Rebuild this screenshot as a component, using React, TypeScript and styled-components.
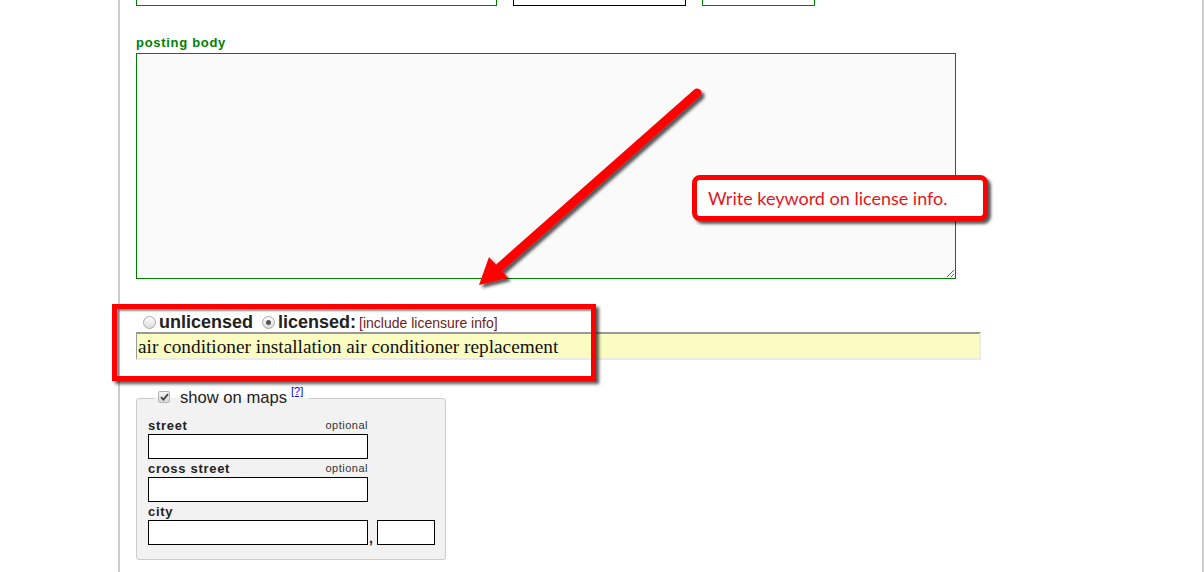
import React from 'react';
import styled, { createGlobalStyle } from 'styled-components';

const GlobalStyle = createGlobalStyle`
  html, body {
    margin: 0;
    padding: 0;
    background: #fff;
    font-family: "Liberation Sans", Arial, sans-serif;
    color: #222;
  }
`;

const Root = styled.div`
  position: relative;
  width: 1204px;
  height: 572px;
  overflow: hidden;
`;

const Page = styled.div`
  box-sizing: border-box;
  margin-left: 118px;
  width: 1086px;
  min-height: 572px;
  border-left: 2px solid #ccc;
  border-right: 2px solid #ccc;
  padding-left: 16px;
  overflow: hidden;
`;

const TopRow = styled.div`
  display: flex;
  gap: 16px;
  margin-top: -20px;
`;

const TopBox = styled.div<{ $width: number; $color: string }>`
  box-sizing: border-box;
  width: ${p => p.$width}px;
  height: 26px;
  border: 1px solid ${p => p.$color};
  background: #fff;
`;

const GreenLabel = styled.label`
  display: block;
  margin: 29px 0 2px;
  font-size: 13px;
  line-height: 16px;
  font-weight: bold;
  letter-spacing: 0.7px;
  color: #008000;
`;

const BodyArea = styled.textarea`
  display: block;
  box-sizing: border-box;
  width: 820px;
  height: 226px;
  margin: 0;
  border: 1px solid #008000;
  background: #fafafa;
  outline: none;
  resize: both;
`;

const LicenseBlock = styled.div`
  margin-top: 34px;
`;

const RadioRow = styled.div`
  display: flex;
  align-items: center;
  height: 19px;
  padding-left: 7px;
`;

const RadioDot = styled.span<{ $checked?: boolean }>`
  position: relative;
  box-sizing: border-box;
  width: 13px;
  height: 13px;
  margin: 0 3px 0 ${p => (p.$checked ? '9px' : '0')};
  border: 1px solid #a9a9a9;
  border-radius: 50%;
  background: linear-gradient(#fdfdfd, #dcdcdc);

  &::after {
    content: '';
    display: ${p => (p.$checked ? 'block' : 'none')};
    position: absolute;
    left: 3px;
    top: 3px;
    width: 5px;
    height: 5px;
    border-radius: 50%;
    background: #555;
  }
`;

const RadioText = styled.span`
  font-size: 18px;
  font-weight: bold;
  color: #222;
`;

const Hint = styled.span`
  margin-left: 3px;
  font-size: 14px;
  color: #6e1c1c;
`;

const LicenseInput = styled.input`
  display: block;
  box-sizing: border-box;
  width: 845px;
  height: 28px;
  margin: 0;
  padding: 1px 0 0 1px;
  border-top: 2px solid #999;
  border-left: 1px solid #999;
  border-right: 2px solid #ebebeb;
  border-bottom: 2px solid #ebebeb;
  background: #fafcc2;
  font-family: "Liberation Serif", "Times New Roman", serif;
  font-size: 19.3px;
  color: #111;
  outline: none;
`;

const MapsFieldset = styled.fieldset`
  box-sizing: border-box;
  width: 310px;
  min-width: 0;
  margin: 29px 0 0;
  padding: 11px 10px 12px 11px;
  border: 1px solid #ccc;
  border-radius: 3px;
  background: #f2f2f2;
`;

const Legend = styled.legend`
  display: flex;
  align-items: center;
  height: 18px;
  margin-left: 6px;
  padding: 0 6px 0 4px;
  font-size: 16.6px;
  color: #222;
`;

const CheckBox = styled.span`
  display: inline-flex;
  align-items: center;
  justify-content: center;
  box-sizing: border-box;
  width: 12px;
  height: 12px;
  margin: -2px 10px 0 0;
  border: 1px solid #b5b5b5;
  border-radius: 2px;
  background: linear-gradient(#f4f4f4, #d8d8d8);
`;

const HelpLink = styled.sup`
  align-self: flex-start;
  margin: -3px 0 0 4px;
  font-size: 11px;
  line-height: 11px;
  color: #0000ee;
  text-decoration: underline;
`;

const FieldHead = styled.div`
  display: flex;
  justify-content: space-between;
  align-items: baseline;
  width: 220px;
  height: 16px;
  line-height: 16px;
`;

const FieldName = styled.span`
  font-size: 13px;
  font-weight: bold;
  letter-spacing: 0.7px;
  color: #222;
`;

const Optional = styled.span`
  position: relative;
  top: -1px;
  font-size: 11px;
  letter-spacing: 0.5px;
  color: #333;
`;

const Field = styled.div`
  margin-bottom: 2px;
`;

const TextBox = styled.input<{ $width: number }>`
  display: block;
  box-sizing: border-box;
  width: ${p => p.$width}px;
  height: 25px;
  margin: 0;
  border: 1px solid #000;
  background: #fff;
  outline: none;
`;

const CityRow = styled.div`
  display: flex;
  align-items: flex-end;
`;

const Comma = styled.span`
  margin: 0 4px 0 1px;
  font-size: 14px;
  font-weight: bold;
  line-height: 14px;
`;

/* annotations drawn over the form */

const Highlight = styled.div`
  position: absolute;
  left: 112px;
  top: 304px;
  width: 484px;
  height: 77px;
  box-sizing: border-box;
  border: 5px solid #ff0000;
  box-shadow: 3px 3px 3px rgba(0, 0, 0, 0.65), inset 2px 2px 2px rgba(0, 0, 0, 0.45);
  pointer-events: none;
`;

const Callout = styled.div`
  position: absolute;
  left: 692px;
  top: 175px;
  width: 296px;
  height: 46px;
  box-sizing: border-box;
  display: flex;
  align-items: center;
  padding-left: 11px;
  border: 5px solid #ff0000;
  border-radius: 8px;
  background: #fff;
  box-shadow: 3px 3px 3px rgba(0, 0, 0, 0.65);
  font-family: Lato, "Open Sans", sans-serif;
  font-size: 18px;
  color: #e8141b;
`;

const ArrowLayer = styled.svg`
  position: absolute;
  left: 0;
  top: 0;
  pointer-events: none;
`;

const Arrow = () => (
  <ArrowLayer width="1204" height="572" viewBox="0 0 1204 572">
    <defs>
      <filter id="arrowShadow" x="-20%" y="-20%" width="140%" height="140%">
        <feDropShadow dx="3" dy="3" stdDeviation="1.6" floodColor="#000" floodOpacity="0.65" />
      </filter>
    </defs>
    <g filter="url(#arrowShadow)" fill="#ff0000">
      <line x1="697" y1="93" x2="500" y2="267" stroke="#ff0000" strokeWidth="9" strokeLinecap="round" />
      <polygon points="479,285 489,257 508,278" />
    </g>
  </ArrowLayer>
);

const Check = () => (
  <svg width="9" height="8" viewBox="0 0 9 8">
    <path d="M1 4.2 L3.4 6.6 L8 1.2" fill="none" stroke="#444" strokeWidth="1.8" />
  </svg>
);

export default function App() {
  return (
    <Root>
      <GlobalStyle />
      <Page>
        <TopRow>
          <TopBox $width={361} $color="#008000" />
          <TopBox $width={173} $color="#000" />
          <TopBox $width={113} $color="#008000" />
        </TopRow>

        <GreenLabel>posting body</GreenLabel>
        <BodyArea />

        <LicenseBlock>
          <RadioRow>
            <RadioDot />
            <RadioText>unlicensed</RadioText>
            <RadioDot $checked />
            <RadioText>licensed:</RadioText>
            <Hint>[include licensure info]</Hint>
          </RadioRow>
          <LicenseInput defaultValue="air conditioner installation air conditioner replacement" />
        </LicenseBlock>

        <MapsFieldset>
          <Legend>
            <CheckBox>
              <Check />
            </CheckBox>
            show on maps
            <HelpLink>[?]</HelpLink>
          </Legend>
          <Field>
            <FieldHead>
              <FieldName>street</FieldName>
              <Optional>optional</Optional>
            </FieldHead>
            <TextBox $width={220} />
          </Field>
          <Field>
            <FieldHead>
              <FieldName>cross street</FieldName>
              <Optional>optional</Optional>
            </FieldHead>
            <TextBox $width={220} />
          </Field>
          <Field>
            <FieldHead>
              <FieldName>city</FieldName>
            </FieldHead>
            <CityRow>
              <TextBox $width={220} />
              <Comma>,</Comma>
              <TextBox $width={58} />
            </CityRow>
          </Field>
        </MapsFieldset>
      </Page>

      <Highlight />
      <Arrow />
      <Callout>Write keyword on license info.</Callout>
    </Root>
  );
}
